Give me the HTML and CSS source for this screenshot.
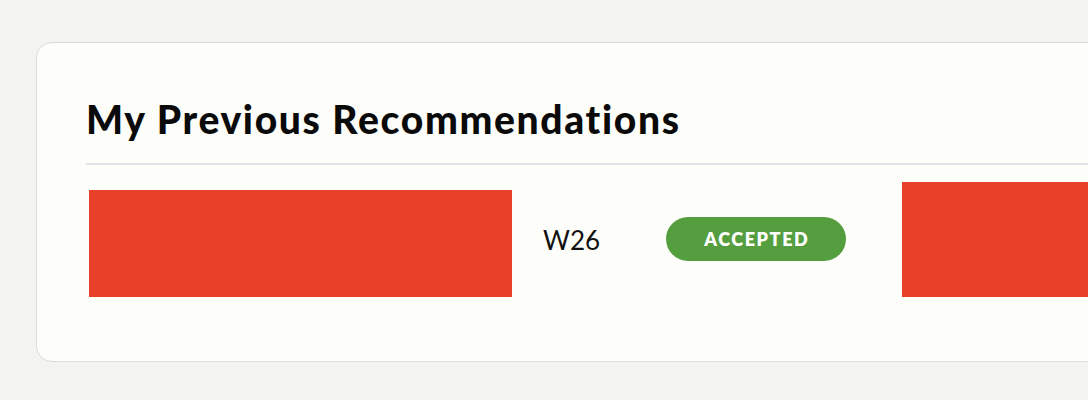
FILE: index.html
```html
<!DOCTYPE html>
<html>
<head>
<meta charset="utf-8">
<link rel="stylesheet" href="styles.css">
</head>
<body>
<div class="card">
  <h1 class="title">My Previous Recommendations</h1>
  <div class="divider"></div>
  <div class="row">
    <div class="cell cell-name"><div class="redact redact-a"></div></div>
    <div class="cell cell-week">W26</div>
    <div class="cell cell-status"><span class="badge">ACCEPTED</span></div>
    <div class="cell cell-extra"><div class="redact redact-b"></div></div>
  </div>
</div>
</body>
</html>
```
FILE: styles.css
```css
html, body {
  margin: 0;
  padding: 0;
}
body {
  background: #f3f3ef;
  font-family: Lato, "Noto Sans", sans-serif;
  color: #111;
  overflow: hidden;
  height: 400px;
}
.card {
  margin: 42px 0 0 36px;
  width: 1140px;
  height: 320px;
  box-sizing: border-box;
  background: #fdfdf9;
  border: 1px solid #dcdcd8;
  border-radius: 16px;
  padding: 49px 0 0 49px;
}
.title {
  margin: 0;
  font-size: 39px;
  font-weight: 900;
  line-height: 54px;
  color: #0a0a0a;
  letter-spacing: 1.65px;
  white-space: nowrap;
}
.divider {
  margin-top: 17px;
  height: 2px;
  background: #e3e4e7;
}
.row {
  display: flex;
  align-items: center;
  margin-top: 17px;
  height: 115px;
}
.cell {
  flex-shrink: 0;
}
.cell-name {
  align-self: flex-end;
  padding-left: 3px;
  width: 454px;
}
.redact {
  background: #e8412a;
}
.redact-a {
  width: 423px;
  height: 107px;
}
.cell-week {
  width: 123px;
  font-size: 26px;
  color: #111;
}
.cell-status {
  width: 236px;
  margin-top: -2px;
}
.badge {
  display: inline-block;
  width: 180px;
  height: 44px;
  line-height: 44px;
  border-radius: 22px;
  background: #559e3f;
  color: #fff;
  text-align: center;
  font-size: 18px;
  font-weight: 800;
  letter-spacing: 1.6px;
  padding-left: 1.6px;
  box-sizing: border-box;
}
.redact-b {
  width: 300px;
  height: 115px;
}
```
